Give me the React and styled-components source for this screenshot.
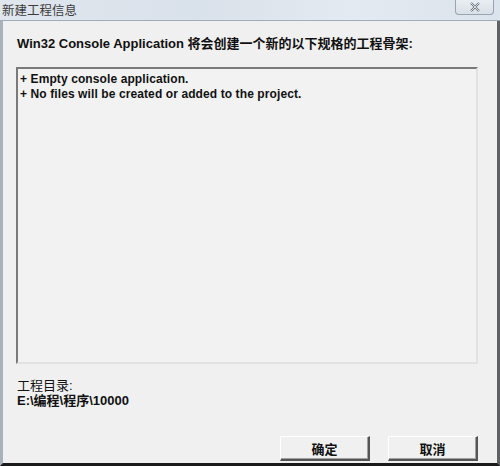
import React from "react";
import styled, { createGlobalStyle } from "styled-components";

const GlobalStyle = createGlobalStyle`
  html, body {
    margin: 0;
    padding: 0;
    width: 500px;
    height: 466px;
    overflow: hidden;
    background: #f0f0f0;
  }
`;

const Window = styled.div`
  box-sizing: border-box;
  width: 500px;
  height: 466px;
  display: flex;
  flex-direction: column;
  border-left: 3px solid #a9b1ba;
  border-right: 3px solid #5e6266;
  border-bottom: 3px solid #1a1a1a;
  background: #f0f0f0;
  font-family: "Liberation Sans", "Noto Sans CJK SC", sans-serif;
`;

const TitleBar = styled.div`
  height: 20px;
  margin-left: -3px;
  margin-right: -3px;
  display: flex;
  justify-content: space-between;
  align-items: flex-start;
  background: linear-gradient(90deg, #dfe6ee 0%, #d9e1ea 40%, #e4eaf1 70%, #dbe3ec 100%);
  border-bottom: 1px solid #a3acb6;
`;

const Title = styled.span`
  padding: 2px 0 0 2px;
  font-family: "Noto Sans CJK SC", sans-serif;
  font-size: 12.5px;
  line-height: 16px;
  color: #3c3c3c;
`;

const CloseButton = styled.div`
  width: 37px;
  height: 14px;
  margin-right: 6px;
  display: flex;
  align-items: center;
  justify-content: center;
  border: 1px solid #9aa4ae;
  border-top: none;
  border-radius: 0 0 4px 4px;
  background: linear-gradient(#e9eef3, #d8e0e8);
`;

const Client = styled.div`
  flex: 1;
  min-height: 0;
  display: flex;
  flex-direction: column;
  padding: 15px 19px 0 13px;
`;

const Heading = styled.div`
  font-size: 13px;
  font-weight: bold;
  line-height: 16px;
  color: #111;
  padding-left: 1px;
`;

const InfoBox = styled.div`
  box-sizing: border-box;
  margin-top: 15px;
  height: 297px;
  flex-shrink: 0;
  padding: 3px 2px;
  background: #f2f2f2;
  border-top: 2px solid #7a7a7a;
  border-left: 2px solid #7a7a7a;
  border-right: 2px solid #e2e2e2;
  border-bottom: 2px solid #e2e2e2;
`;

const InfoLine = styled.div`
  font-size: 12px;
  font-weight: bold;
  line-height: 15px;
  letter-spacing: 0.1px;
  color: #111;
`;

const DirBlock = styled.div`
  margin-top: 14px;
  padding-left: 1px;
`;

const DirLine = styled.div`
  font-size: 13px;
  font-weight: ${(p) => (p.$bold ? "bold" : "normal")};
  line-height: 15px;
  color: #111;
`;

const ButtonRow = styled.div`
  display: flex;
  justify-content: flex-end;
  gap: 18px;
  margin-top: 28px;
`;

const Button = styled.div`
  box-sizing: border-box;
  width: 90px;
  height: 25px;
  display: flex;
  align-items: center;
  justify-content: center;
  background: #f0f0f0;
  border-top: 1px solid #ffffff;
  border-left: 1px solid #ffffff;
  border-right: 2px solid #555;
  border-bottom: 2px solid #555;
  box-shadow: inset -1px -1px 0 #a0a0a0;
  font-family: "Noto Sans CJK SC", sans-serif;
  font-size: 13px;
  font-weight: bold;
  color: #111;
`;

const App = () => {
  return (
    <>
      <GlobalStyle />
      <Window>
        <TitleBar>
          <Title>新建工程信息</Title>
          <CloseButton>
            <svg width="12" height="10" viewBox="0 0 12 10">
              <path
                d="M2 1 L10 9 M10 1 L2 9"
                stroke="#6d7680"
                strokeWidth="2.2"
                fill="none"
              />
              <path
                d="M2 1 L10 9 M10 1 L2 9"
                stroke="#f4f6f8"
                strokeWidth="0.8"
                fill="none"
              />
            </svg>
          </CloseButton>
        </TitleBar>
        <Client>
          <Heading>
            Win32 Console Application 将会创建一个新的以下规格的工程骨架:
          </Heading>
          <InfoBox>
            <InfoLine>+ Empty console application.</InfoLine>
            <InfoLine>+ No files will be created or added to the project.</InfoLine>
          </InfoBox>
          <DirBlock>
            <DirLine>工程目录:</DirLine>
            <DirLine $bold>E:\编程\程序\10000</DirLine>
          </DirBlock>
          <ButtonRow>
            <Button>确定</Button>
            <Button>取消</Button>
          </ButtonRow>
        </Client>
      </Window>
    </>
  );
};

export default App;
